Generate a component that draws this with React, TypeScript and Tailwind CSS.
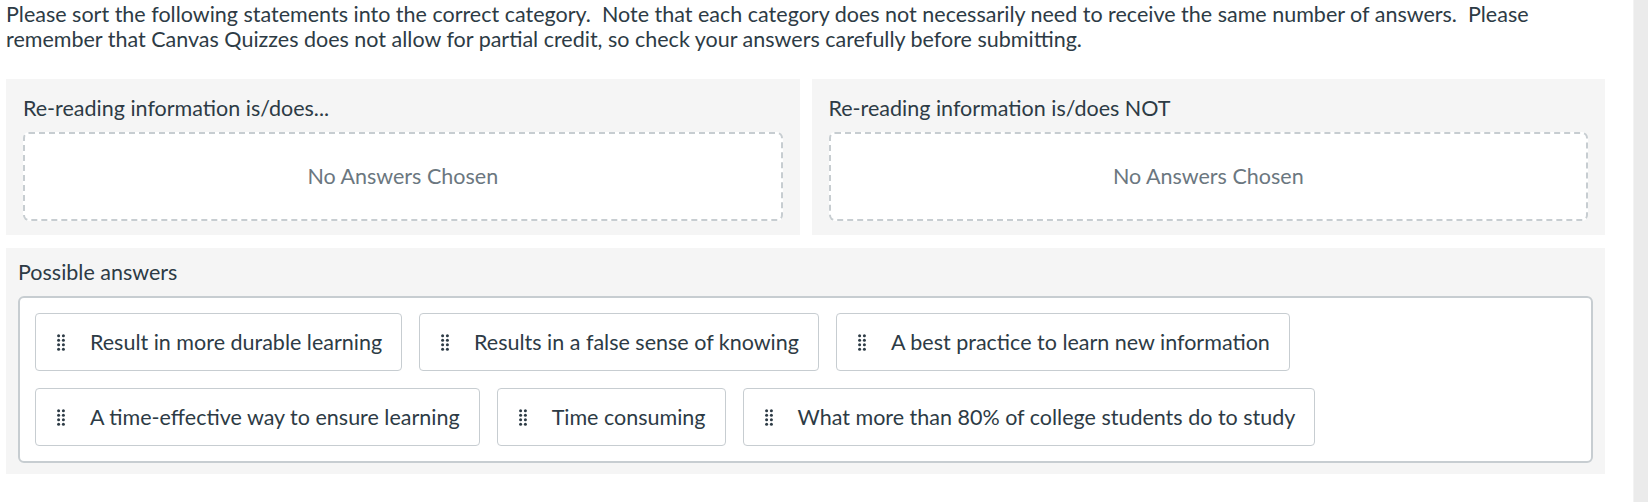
import React from 'react';

const rowOne = [
  'Result in more durable learning',
  'Results in a false sense of knowing',
  'A best practice to learn new information',
];

const rowTwo = [
  'A time-effective way to ensure learning',
  'Time consuming',
  'What more than 80% of college students do to study',
];

function DragDots() {
  return (
    <svg width="8" height="17" viewBox="0 0 8 17" className="shrink-0 text-[#2d3b45]">
      {[1.7, 6.2, 10.7, 15.2].map((y) => (
        <g key={y}>
          <circle cx="1.6" cy={y} r="1.5" fill="currentColor" />
          <circle cx="6.4" cy={y} r="1.5" fill="currentColor" />
        </g>
      ))}
    </svg>
  );
}

function AnswerChip({ label }: { label: string }) {
  return (
    <div className="flex h-[58px] items-center rounded-[4px] border border-[#c7cdd1] bg-white pl-[21px] pr-[19px]">
      <DragDots />
      <span className="ml-[25px] whitespace-nowrap text-[21.5px] text-[#2d3b45]">{label}</span>
    </div>
  );
}

function Category({ title }: { title: string }) {
  return (
    <div className="flex-1 bg-[#f5f5f5] px-[17px] pt-[15px] pb-[14px]">
      <h3 className="text-[21.5px] leading-[28px] text-[#2d3b45]">{title}</h3>
      <div className="mt-[10px] flex h-[89px] items-center justify-center rounded-[6px] border-2 border-dashed border-[#c7cdd1] bg-white">
        <span className="text-[21.5px] text-[#6b7780]">No Answers Chosen</span>
      </div>
    </div>
  );
}

export default function App() {
  return (
    <div className="flex h-[502px] w-full bg-white" style={{ fontFamily: 'Lato, "Open Sans", sans-serif' }}>
      <div className="flex-1 pl-[6px] pr-[28px]">
        <p className="pt-[2px] text-[21.5px] leading-[25px] text-[#2d3b45]">
          Please sort the following statements into the correct category.&nbsp; Note that each category does not necessarily need to receive the same number of answers.&nbsp; Please remember that Canvas Quizzes does not allow for partial credit, so check your answers carefully before submitting.
        </p>

        <div className="mt-[27px] flex gap-[12px]">
          <Category title="Re-reading information is/does..." />
          <Category title="Re-reading information is/does NOT" />
        </div>

        <div className="mt-[13px] bg-[#f5f5f5] px-[12px] pt-[10px] pb-[11px]">
          <h3 className="text-[21.5px] leading-[28px] text-[#2d3b45]">Possible answers</h3>
          <div className="mt-[10px] flex flex-col gap-[17px] rounded-[6px] border-2 border-[#c7cdd1] bg-white px-[15px] pt-[15px] pb-[15px]">
            <div className="flex gap-[17px]">
              {rowOne.map((a) => (
                <AnswerChip key={a} label={a} />
              ))}
            </div>
            <div className="flex gap-[17px]">
              {rowTwo.map((a) => (
                <AnswerChip key={a} label={a} />
              ))}
            </div>
          </div>
        </div>
      </div>
      <div className="w-[15px] shrink-0 border-l border-[#f3f3f3] bg-[#ebebeb]" />
    </div>
  );
}
